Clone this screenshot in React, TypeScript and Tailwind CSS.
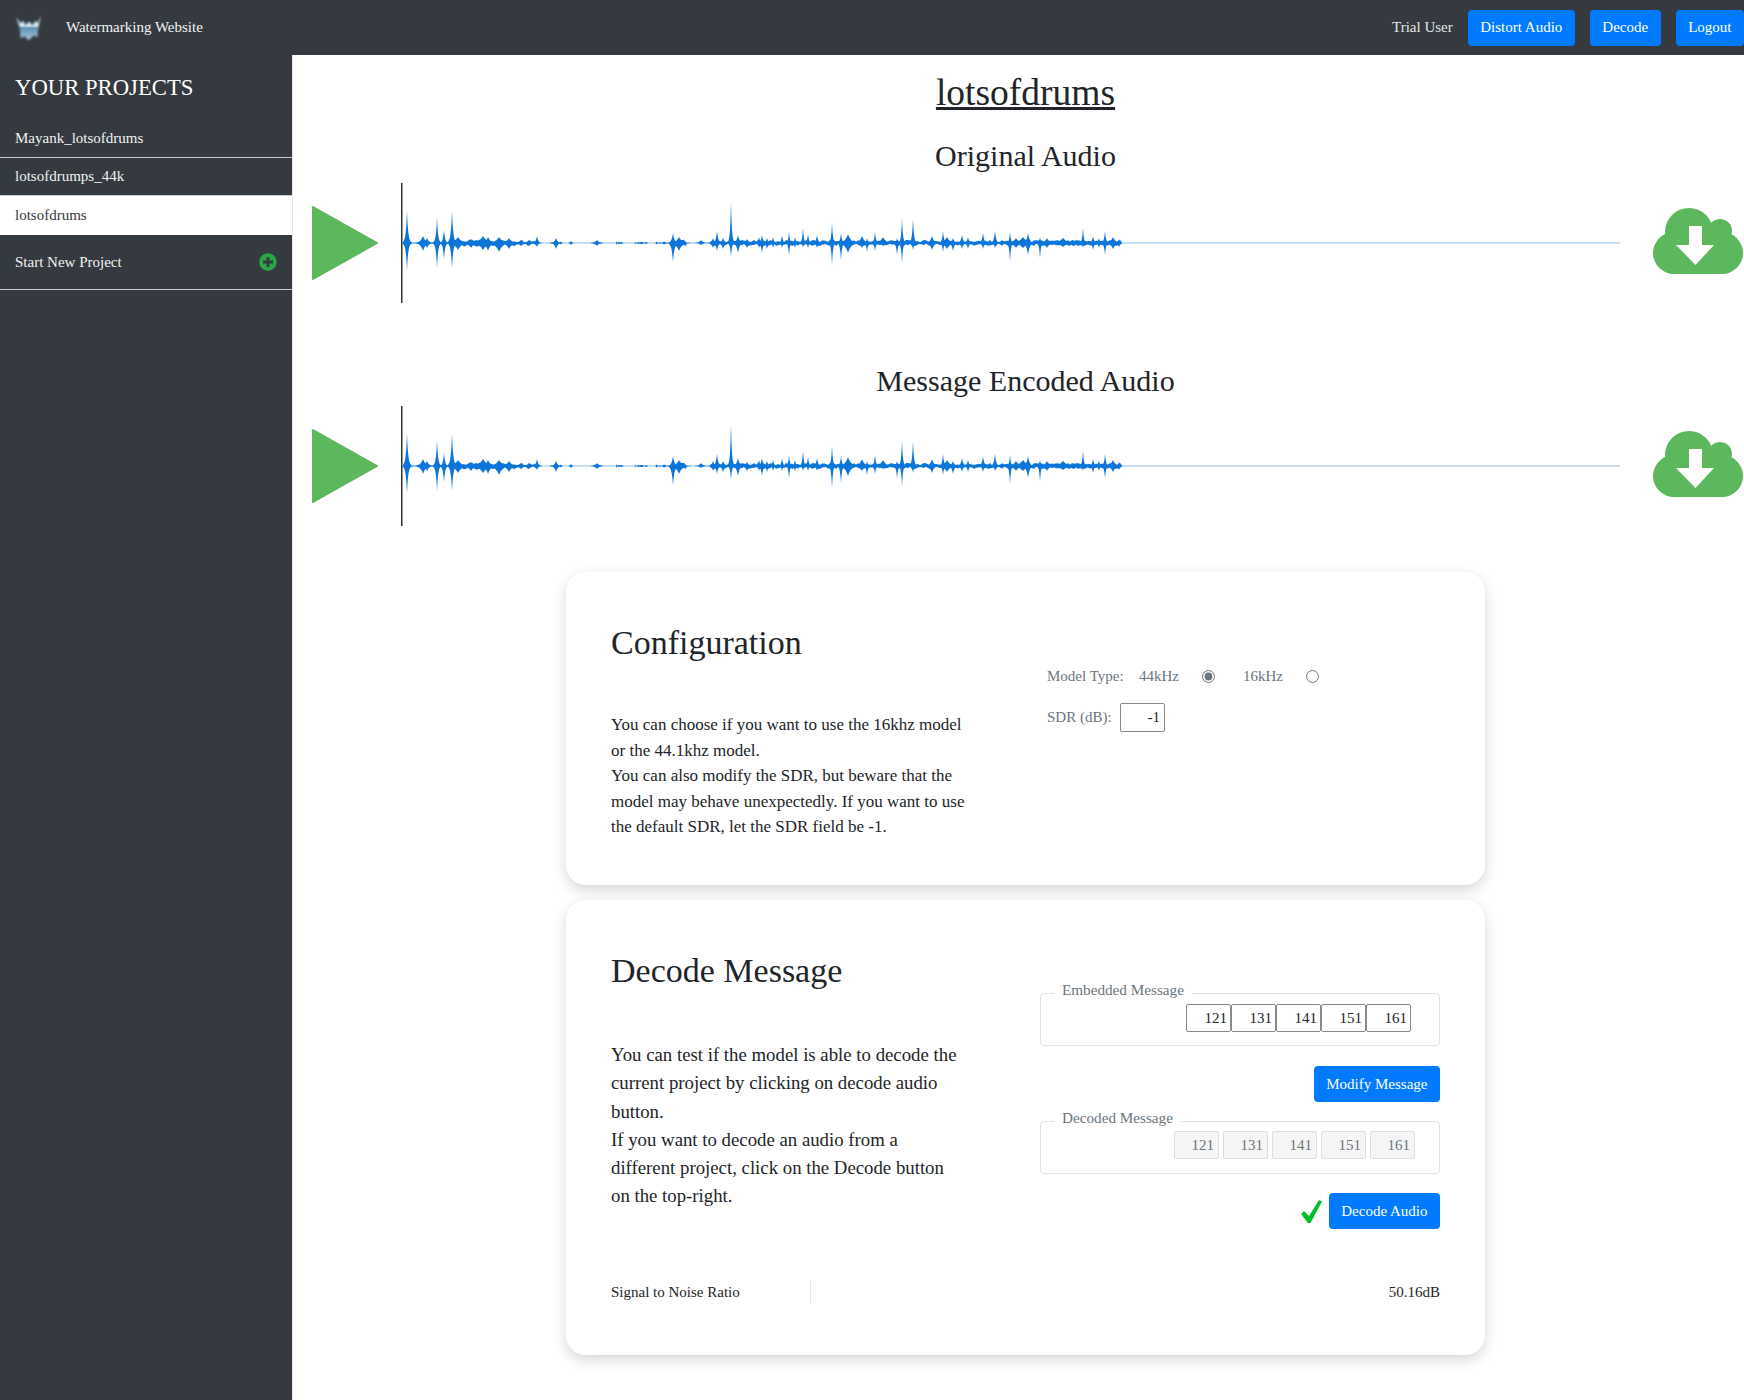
import { FC } from 'react';
import { FaPlusCircle } from 'react-icons/fa';

// [x offset from the playhead, amplitude up, amplitude down, decay width]
const SPIKES: number[][] = [
  [6, 32, 27, 1.2], [22, 7, 8, 2.5], [26, 5, 5, 2], [36, 25, 25, 1.1], [43, 13, 16, 1.1], [51, 32, 25, 1.2],
  [57, 6, 7, 3.5], [70, 3, 5, 3], [82, 7, 7, 4], [87, 6, 8, 2.5], [98, 6, 9, 3.5], [108, 5, 6, 3], [120, 3, 3, 3], [128, 3, 3, 2.5],
  [136, 7, 4, 1.3], [155, 5, 6, 1.6], [170, 2, 2, 1], [196, 3, 3, 2], [272, 10, 19, 1.4], [278, 6, 8, 3],
  [300, 3, 2, 2], [312, 5, 5, 1.5], [316, 12, 8, 1.2], [322, 5, 6, 1.6], [330, 41, 14, 0.9], [337, 8, 10, 1.6],
  [346, 4, 5, 2], [358, 6, 5, 1.2], [361, 8, 10, 1.2], [366, 5, 6, 1.3], [372, 6, 5, 1], [381, 8, 5, 1], [388, 11, 12, 0.9],
  [394, 6, 5, 1], [402, 15, 5, 0.9], [407, 9, 5, 1], [416, 8, 5, 1.2], [431, 20, 22, 0.9], [440, 10, 17, 1], [447, 9, 10, 3],
  [461, 7, 5, 2.5], [466, 5, 9, 1], [474, 11, 8, 1], [482, 6, 3, 3], [496, 5, 12, 1], [501, 25, 20, 0.9], [512, 24, 7, 1],
  [531, 7, 7, 2], [542, 12, 9, 1], [546, 6, 6, 3], [552, 5, 8, 1.4], [561, 8, 6, 1.3], [567, 6, 6, 1.2], [582, 10, 6, 1.2],
  [594, 12, 5, 1.2], [609, 11, 18, 0.9], [615, 5, 5, 3], [627, 10, 12, 1.6], [622, 6, 5, 4], [639, 6, 15, 0.9], [646, 5, 5, 2.5],
  [662, 5, 4, 4], [672, 3, 3, 3], [682, 15, 5, 0.9], [692, 7, 7, 1.2], [698, 5, 5, 1.2], [704, 12, 12, 1], [712, 6, 6, 2.5], [718, 4, 4, 1.5],
];

// [from, to, amplitude] stretches of body between the spikes
const BODY: number[][] = [
  [52, 135, 3], [272, 285, 3], [310, 720, 2.4],
];
const QUIET: number[][] = [[150, 162], [192, 200], [215, 222], [234, 246], [255, 265]];

const noise = (i: number) => {
  const s = Math.sin(i * 12.9898) * 43758.5453;
  return s - Math.floor(s);
};

// interpolated so the body reads as lumps, not as comb teeth
const smoothNoise = (x: number) => {
  const i = Math.floor(x / 2);
  const t = x / 2 - i;
  return noise(i) * (1 - t) + noise(i + 1) * t;
};

const ampAt = (x: number, side: number) => {
  let a = 0;
  for (const [sx, up, down, w] of SPIKES) {
    a = Math.max(a, (side > 0 ? up : down) * Math.exp(-Math.abs(x - sx) / w));
  }
  for (const [from, to, amp] of BODY) {
    if (x >= from && x <= to) {
      a = Math.max(a, amp * smoothNoise(x + side * 3) + 0.6);
    }
  }
  for (const [from, to] of QUIET) {
    if (x >= from && x <= to) a = Math.max(a, noise(Math.round(x)) * 1.4);
  }
  return a;
};

const buildPath = () => {
  const top: string[] = [];
  const bottom: string[] = [];
  for (let x = 2; x <= 721; x += 0.5) {
    top.push(`${x} ${(60 - ampAt(x, 1)).toFixed(2)}`);
    bottom.unshift(`${x} ${(60 + ampAt(x, -1)).toFixed(2)}`);
  }
  return `M${top.join('L')}L${bottom.join('L')}Z`;
};
const WAVE_PATH = buildPath();

const Logo: FC = () => (
  <svg width="28" height="28" viewBox="0 0 30 30" className="blur-[1px]">
    <defs>
      <linearGradient id="logoFill" x1="0" y1="0" x2="0" y2="1">
        <stop offset="0" stopColor="#8fd0ea" />
        <stop offset="0.45" stopColor="#dff1f7" />
        <stop offset="0.6" stopColor="#6a9dbc" />
        <stop offset="1" stopColor="#a9c6d6" />
      </linearGradient>
    </defs>
    <path d="M1 3 L6 10 L9 7 L11 12 L15 8 L19 12 L22 7 L24 10 L28 1 L25 14 L24 25 L20 23 L15 28 L10 24 L6 26 L5 14Z" fill="url(#logoFill)" />
    <rect x="5" y="14" width="19" height="2" fill="#3f7da3" />
  </svg>
);

const Waveform: FC = () => (
  <svg width="1219" height="120" viewBox="0 0 1219 120" className="block">
    <rect x="0" y="59.2" width="1219" height="1.6" fill="#bcd8ee" />
    <path d={WAVE_PATH} fill="#0b75d9" />
    <rect x="0" y="0" width="1.5" height="120" fill="#333333" />
  </svg>
);

const AudioRow: FC = () => (
  <div className="flex items-center h-[120px] pl-[4px]">
    <svg width="68" height="76" viewBox="0 0 68 76" className="shrink-0">
      <path d="M2 2 L66 38 L2 74Z" fill="#5cb85c" stroke="#5cb85c" strokeWidth="2" strokeLinejoin="round" />
    </svg>
    <div className="ml-[22px] shrink-0">
      <Waveform />
    </div>
    <svg width="90" height="66" viewBox="0 0 90 66" className="ml-[33px] shrink-0 mb-[4px]">
      <g fill="#5cb85c">
        <circle cx="36" cy="24" r="24" />
        <circle cx="67" cy="23" r="12" />
        <circle cx="21" cy="45" r="21" />
        <circle cx="69" cy="45" r="21" />
        <rect x="21" y="24" width="48" height="42" />
      </g>
      <path d="M36 18H49V37H61L42.5 57L23 37H36Z" fill="#ffffff" />
    </svg>
  </div>
);

const NavButton: FC<{ label: string; className?: string }> = ({ label, className }) => (
  <button className={`h-[36px] px-[12.5px] rounded-[4px] bg-[#007bff] text-white text-[15px] ${className ?? ''}`}>
    {label}
  </button>
);

const MESSAGE = ['121', '131', '141', '151', '161'];

const App: FC = () => {
  return (
    <div className="h-[1400px] flex flex-col overflow-hidden bg-white text-[#212529] [font-family:'Liberation_Serif',serif]">
      <header className="h-[55px] shrink-0 bg-[#343a40] flex items-center pl-[15px] pr-0 text-white">
        <Logo />
        <span className="ml-[23px] text-[15px] text-[#f2f2f2]">Watermarking Website</span>
        <div className="ml-auto flex items-center">
          <span className="text-[15px] text-[#e6e6e6] mr-[15px]">Trial User</span>
          <NavButton label="Distort Audio" className="mr-[15px]" />
          <NavButton label="Decode" className="mr-[15px]" />
          <NavButton label="Logout" />
        </div>
      </header>

      <div className="flex flex-1 min-h-0">
        <aside className="w-[292px] shrink-0 bg-[#343a40] text-[#f2f2f2] text-[15px]">
          <h2 className="h-[64px] flex items-center pl-[15px] pt-[2px] text-[22.7px] text-white">YOUR PROJECTS</h2>
          <div className="h-[39px] flex items-center pl-[15px] border-b border-[#c8cacc]">Mayank_lotsofdrums</div>
          <div className="h-[38px] flex items-center pl-[15px] border-b border-[#c8cacc]">lotsofdrumps_44k</div>
          <div className="h-[39px] flex items-center pl-[15px] bg-white text-[#343a40]">lotsofdrums</div>
          <div className="h-[55px] flex items-center justify-between pl-[15px] pr-[15px] border-b border-[#c8cacc]">
            <span>Start New Project</span>
            <FaPlusCircle className="text-[#28a745] w-[18px] h-[18px]" />
          </div>
        </aside>

        <main className="flex-1 min-w-0 pl-[14px] pt-[16px] border-l border-[#e4e6e8]">
          <h1 className="text-[37.5px] leading-[44px] text-center underline">lotsofdrums</h1>
          <h2 className="text-[30px] leading-[38px] text-center mt-[22px]">Original Audio</h2>
          <div className="mt-[8px]">
            <AudioRow />
          </div>
          <h2 className="text-[30px] leading-[38px] text-center mt-[59px]">Message Encoded Audio</h2>
          <div className="mt-[6px]">
            <AudioRow />
          </div>

          <section className="w-[919px] h-[313px] mx-auto mt-[46px] rounded-[20px] bg-white shadow-[0_5px_14px_rgba(0,0,0,0.16)] px-[45px] pt-[49px] flex">
            <div className="w-[429px] shrink-0">
              <h3 className="text-[34px] leading-[44px]">Configuration</h3>
              <p className="w-[360px] mt-[47px] text-[17px] leading-[25.6px]">
                You can choose if you want to use the 16khz model or the 44.1khz model.
                <br />
                You can also modify the SDR, but beware that the model may behave unexpectedly. If you want to use the default SDR, let the SDR field be -1.
              </p>
            </div>
            <div className="pl-[7px] pt-[45px] text-[15px] text-[#6c757d]">
              <div className="flex items-center h-[20px]">
                <span className="w-[92px]">Model Type:</span>
                <span className="w-[63px]">44kHz</span>
                <input type="radio" readOnly checked className="w-[13px] h-[13px] accent-[#6c757d]" />
                <span className="ml-[28px] w-[63px]">16kHz</span>
                <input type="radio" readOnly checked={false} className="w-[13px] h-[13px]" />
              </div>
              <div className="flex items-center mt-[17px]">
                <span className="w-[73px]">SDR (dB):</span>
                <input readOnly value="-1" className="w-[45px] h-[29px] border border-[#8a8a8a] rounded-[2px] text-right pr-[4px] text-[#212529]" />
              </div>
            </div>
          </section>

          <section className="w-[919px] h-[455px] mx-auto mt-[15px] rounded-[20px] bg-white shadow-[0_5px_14px_rgba(0,0,0,0.16)] px-[45px] pt-[49px]">
            <div className="flex">
              <div className="w-[429px] shrink-0">
                <h3 className="text-[34px] leading-[44px]">Decode Message</h3>
                <p className="w-[350px] mt-[48px] text-[18.8px] leading-[28.3px]">
                  You can test if the model is able to decode the current project by clicking on decode audio button.
                  <br />
                  If you want to decode an audio from a different project, click on the Decode button on the top-right.
                </p>
              </div>
              <div className="flex-1 pt-[32px]">
                <fieldset className="h-[65px] border border-[#dee2e6] rounded-[4px] pr-[28px] flex justify-end">
                  <legend className="ml-[13px] px-[8px] pb-[6px] text-[15.2px] leading-[18px] text-[#6c757d]">Embedded Message</legend>
                  <div className="flex justify-end -mt-[1px]">
                    {MESSAGE.map((v) => (
                      <input key={v} readOnly value={v} className="w-[45px] h-[28px] border border-[#8a8a8a] rounded-[2px] text-right pr-[3px] text-[15px] text-[#212529]" />
                    ))}
                  </div>
                </fieldset>
                <div className="flex justify-end mt-[20px]">
                  <NavButton label="Modify Message" />
                </div>
                <fieldset className="h-[65px] mt-[7px] border border-[#dee2e6] rounded-[4px] pr-[24px] flex justify-end">
                  <legend className="ml-[13px] px-[8px] pb-[6px] text-[15.2px] leading-[18px] text-[#6c757d]">Decoded Message</legend>
                  <div className="flex justify-end gap-[4px] -mt-[2px]">
                    {MESSAGE.map((v) => (
                      <input key={v} readOnly disabled value={v} className="w-[45px] h-[28px] border border-[#dddddd] rounded-[2px] bg-[#f5f5f5] text-right pr-[4px] text-[15px] text-[#6c757d]" />
                    ))}
                  </div>
                </fieldset>
                <div className="flex justify-end items-center mt-[19px]">
                  <svg width="21" height="23" viewBox="0 0 21 23" className="mr-[7px]">
                    <path d="M0 14 L3 11 L8 16 L18 0 L21 1.5 L9.5 23 L7 23Z" fill="#00bf2d" />
                  </svg>
                  <NavButton label="Decode Audio" />
                </div>
              </div>
            </div>
            <div className="flex items-center mt-[51px] h-[24px] text-[15px]">
              <span className="w-[200px] h-full flex items-center border-r border-[#e4e6e8]">Signal to Noise Ratio</span>
              <span className="ml-auto">50.16dB</span>
            </div>
          </section>
        </main>
      </div>
    </div>
  );
};

export default App;
